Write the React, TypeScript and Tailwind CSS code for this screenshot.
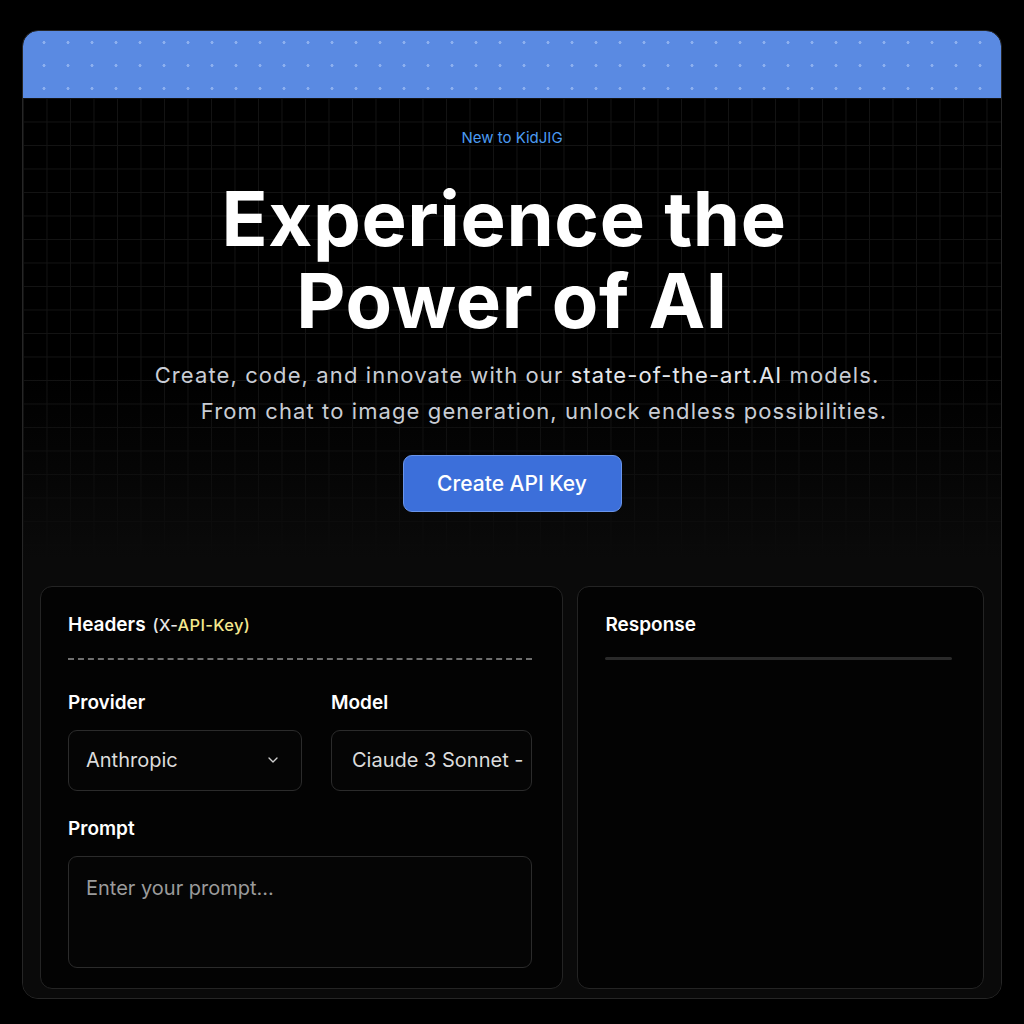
import React from "react";
import { ChevronDown } from "lucide-react";

export default function App() {
  return (
    <div className="min-h-[1024px] w-full bg-black pt-[30px] px-[22px] font-['Inter',sans-serif]">
      <div className="h-[969px] w-[980px] rounded-[16px] border border-[#262626] bg-[#0a0a0a] overflow-hidden flex flex-col">
        {/* blue band */}
        <div className="h-[67px] shrink-0 rounded-t-[15px] bg-[#5a8ae2] bg-[radial-gradient(circle,#8db0ef_1.3px,transparent_1.8px)] bg-[size:24px_23px] bg-[position:9px_0px]" />
        {/* hero with grid */}
        <div className="h-[460px] shrink-0 flex flex-col items-center bg-black bg-[linear-gradient(to_bottom,transparent_60%,#0a0a0a),linear-gradient(to_right,#131313_1px,transparent_1px),linear-gradient(to_bottom,#131313_1px,transparent_1px)] bg-[size:100%_100%,23.5px_23.5px,23.5px_23.5px]">
          <div className="mt-[30px] h-[20px] text-[15px] leading-[20px] text-[#4b9bf2]">New to KidJIG</div>
          <h1 className="mt-[29px] text-center text-[76px] leading-[82px] font-bold tracking-[0.6px] text-white">
            <div className="pr-[16px]">Experience the</div>
            <div>Power of AI</div>
          </h1>
          <div className="mt-[16px] w-full text-[22px] leading-[36px] text-[#c9cdd5] tracking-[1.1px]">
            <div className="pl-[10px] text-center">
              Create, code, and innovate with our <span className="text-[#e4e7ec]">state-of-the-art.AI</span> models.
            </div>
            <div className="pl-[64px] text-center">From chat to image generation, unlock endless possibilities.</div>
          </div>
          <button className="mt-[26px] h-[57px] w-[219px] rounded-[9px] border border-[#6a95ea] bg-[#3c6fda] text-[21px] font-medium text-white">
            Create API Key
          </button>
        </div>

        <div className="flex-1 flex flex-col bg-[#0a0a0a]">
          <div className="mt-auto px-[17px] pb-[9px] flex gap-[14px]">
            {/* left panel */}
            <div className="h-[403px] w-[524px] rounded-[12px] border border-[#242424] bg-[#030303] pl-[27px] pr-[30px] pt-[24px]">
              <div className="flex items-baseline gap-[7px]">
                <span className="text-[19px] font-semibold text-white">Headers</span>
                <span className="text-[16.5px] font-medium tracking-[0.3px]">
                  <span className="text-[#e8e8e8]">(X-</span>
                  <span className="text-[#f5e88f]">API-Key)</span>
                </span>
              </div>
              <div className="mt-[18px] border-t-2 border-dashed border-[#8a8a8a] opacity-80" />
              <div className="mt-[30px] grid grid-cols-[234px_1fr] gap-x-[29px]">
                <div>
                  <div className="text-[19px] font-semibold text-white leading-[26px]">Provider</div>
                  <div className="mt-[14px] h-[61px] rounded-[9px] border border-[#2b2b2b] bg-[#050505] pl-[17px] pr-[20px] flex items-center justify-between">
                    <span className="text-[20px] text-[#dcdcdc]">Anthropic</span>
                    <ChevronDown size={16} strokeWidth={2} className="text-[#cfcfcf]" />
                  </div>
                </div>
                <div>
                  <div className="text-[19px] font-semibold text-white leading-[26px]">Model</div>
                  <div className="mt-[14px] h-[61px] rounded-[9px] border border-[#2b2b2b] bg-[#050505] pl-[20px] flex items-center overflow-hidden">
                    <span className="text-[20px] text-[#dcdcdc] whitespace-nowrap">Ciaude 3 Sonnet -</span>
                  </div>
                </div>
              </div>
              <div className="mt-[25px] text-[19px] font-semibold text-white leading-[26px]">Prompt</div>
              <textarea
                className="mt-[14px] block h-[112px] w-full resize-none rounded-[9px] border border-[#2b2b2b] bg-[#050505] px-[17px] py-[16px] text-[20px] text-[#dcdcdc] placeholder:text-[#9b9b9b] outline-none"
                placeholder="Enter your prompt..."
              />
            </div>
            {/* right panel */}
            <div className="h-[403px] w-[407px] rounded-[12px] border border-[#242424] bg-[#030303] pl-[27px] pr-[31px] pt-[24px]">
              <div className="text-[19px] font-semibold text-white leading-[28px]">Response</div>
              <div className="mt-[18px] h-[3px] rounded bg-[#2a2a2a]" />
            </div>
          </div>
        </div>
      </div>
    </div>
  );
}
